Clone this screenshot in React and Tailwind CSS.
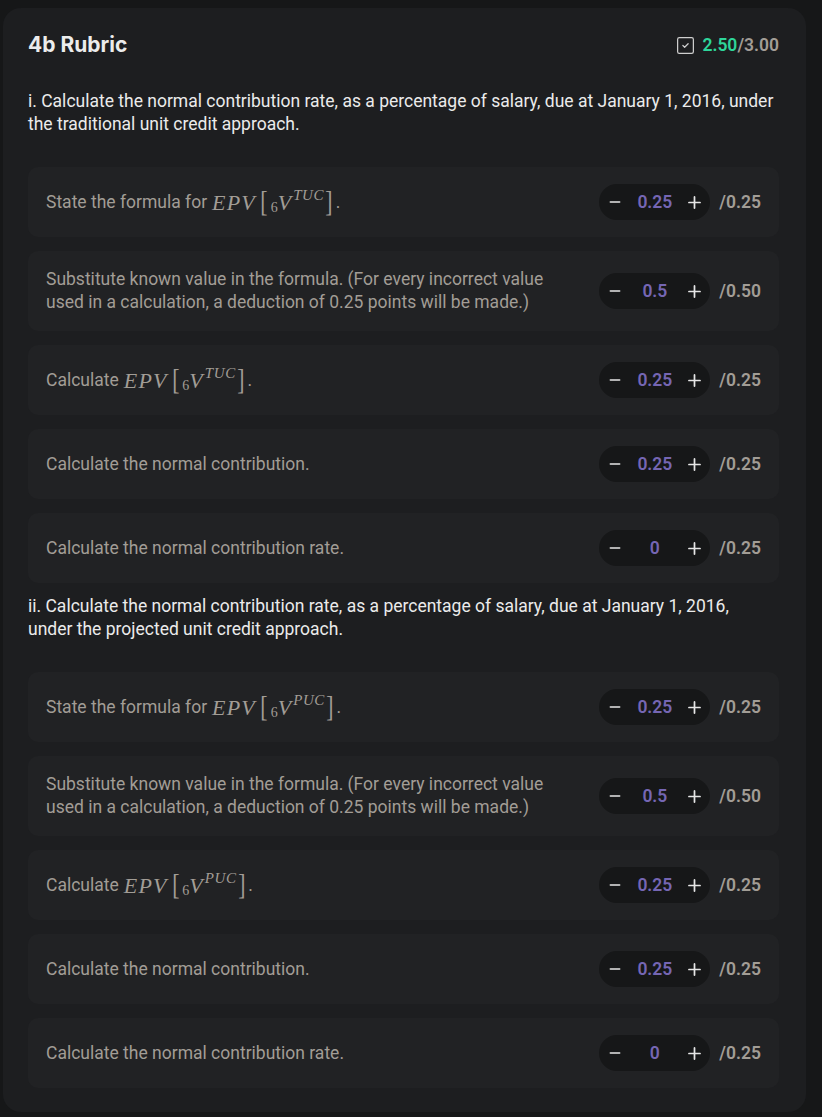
import React, { useState } from 'react';
import { SquareCheck, Minus, Plus } from 'lucide-react';

const sections = [
  {
    question:
      'i. Calculate the normal contribution rate, as a percentage of salary, due at January 1, 2016, under the traditional unit credit approach.',
    sup: 'TUC',
  },
  {
    question:
      'ii. Calculate the normal contribution rate, as a percentage of salary, due at January 1, 2016, under the projected unit credit approach.',
    sup: 'PUC',
  },
];

const buildItems = (sup) => [
  { kind: 'formula', prefix: 'State the formula for', sup, score: 0.25, max: '0.25' },
  {
    kind: 'text',
    text: 'Substitute known value in the formula. (For every incorrect value used in a calculation, a deduction of 0.25 points will be made.)',
    score: 0.5,
    max: '0.50',
  },
  { kind: 'formula', prefix: 'Calculate', sup, score: 0.25, max: '0.25' },
  { kind: 'text', text: 'Calculate the normal contribution.', score: 0.25, max: '0.25' },
  { kind: 'text', text: 'Calculate the normal contribution rate.', score: 0, max: '0.25' },
];

// EPV[ _6 V^{sup} ] drawn with serif text, KaTeX style
const Epv = ({ sup }) => (
  <span className="inline-flex items-center font-['Liberation_Serif',serif] ml-[5px]">
    <span className="italic text-[22px] tracking-[1.2px]">EPV</span>
    <span className="text-[29px] leading-none font-light ml-[3px] scale-x-75 -translate-y-[1px]">[</span>
    <span className="text-[14px] translate-y-[5px] ml-[2px]">6</span>
    <span className="italic text-[22px] tracking-[2px]">V</span>
    <span className="italic text-[15px] tracking-[0.6px] -translate-y-[7px]">{sup}</span>
    <span className="text-[29px] leading-none font-light scale-x-75 -translate-y-[1px]">]</span>
    <span className="text-[17.5px] font-['Roboto',sans-serif] ml-[2px]">.</span>
  </span>
);

const Stepper = ({ initial, max }) => {
  const [value, setValue] = useState(initial);
  const cap = parseFloat(max);
  return (
    <div className="flex items-center shrink-0 gap-[9px]">
      <div className="flex items-center h-9 px-[4px] rounded-full bg-[#161718]">
        <button
          className="w-6 h-6 flex items-center justify-center text-[#e6e6e6]"
          onClick={() => setValue((v) => Math.max(0, v - 0.25))}
        >
          <Minus size={16} strokeWidth={2.4} />
        </button>
        <span className="w-[55px] text-center text-[17.5px] font-semibold text-[#7566b3]">{value}</span>
        <button
          className="w-6 h-6 flex items-center justify-center text-[#e6e6e6]"
          onClick={() => setValue((v) => Math.min(cap, v + 0.25))}
        >
          <Plus size={19} strokeWidth={2.2} />
        </button>
      </div>
      <span className="text-[17.5px] font-semibold text-[#a29d96]">/{max}</span>
    </div>
  );
};

const RubricRow = ({ item }) => (
  <div className="flex items-center justify-between gap-4 rounded-[10px] bg-[#212224] px-[18px] py-[17px]">
    <div className="text-[17.5px] leading-[23px] text-[#a29d96] max-w-[515px] flex items-center">
      {item.kind === 'formula' ? (
        <>
          {item.prefix}
          <Epv sup={item.sup} />
        </>
      ) : (
        item.text
      )}
    </div>
    <Stepper initial={item.score} max={item.max} />
  </div>
);

export default function App() {
  return (
    <div className="min-h-screen bg-[#161718] pt-2 pl-[3px] font-['Roboto',sans-serif]">
      <div className="w-[803px] rounded-[18px] bg-[#1d1e20] pl-[25px] pr-[27px] pt-6 pb-6">
        <div className="flex items-center justify-between h-[26px]">
          <h2 className="text-[21px] font-bold text-[#ececec] font-['Inter',sans-serif]">4b Rubric</h2>
          <div className="flex items-center gap-[6px]">
            <SquareCheck size={21} strokeWidth={1.4} className="text-[#cfcfcf]" />
            <span className="text-[17.5px] font-semibold">
              <span className="text-[#2ed69a]">2.50</span>
              <span className="text-[#a29d96]">/3.00</span>
            </span>
          </div>
        </div>

        {sections.map((section, i) => (
          <div key={i} className={i === 0 ? 'mt-8' : 'mt-3'}>
            <p className="text-[17.5px] leading-[23px] text-[#ebebeb] pr-[4px]">{section.question}</p>
            <div className="mt-[31px] flex flex-col gap-[14px]">
              {buildItems(section.sup).map((item, j) => (
                <RubricRow key={j} item={item} />
              ))}
            </div>
          </div>
        ))}
      </div>
    </div>
  );
}
